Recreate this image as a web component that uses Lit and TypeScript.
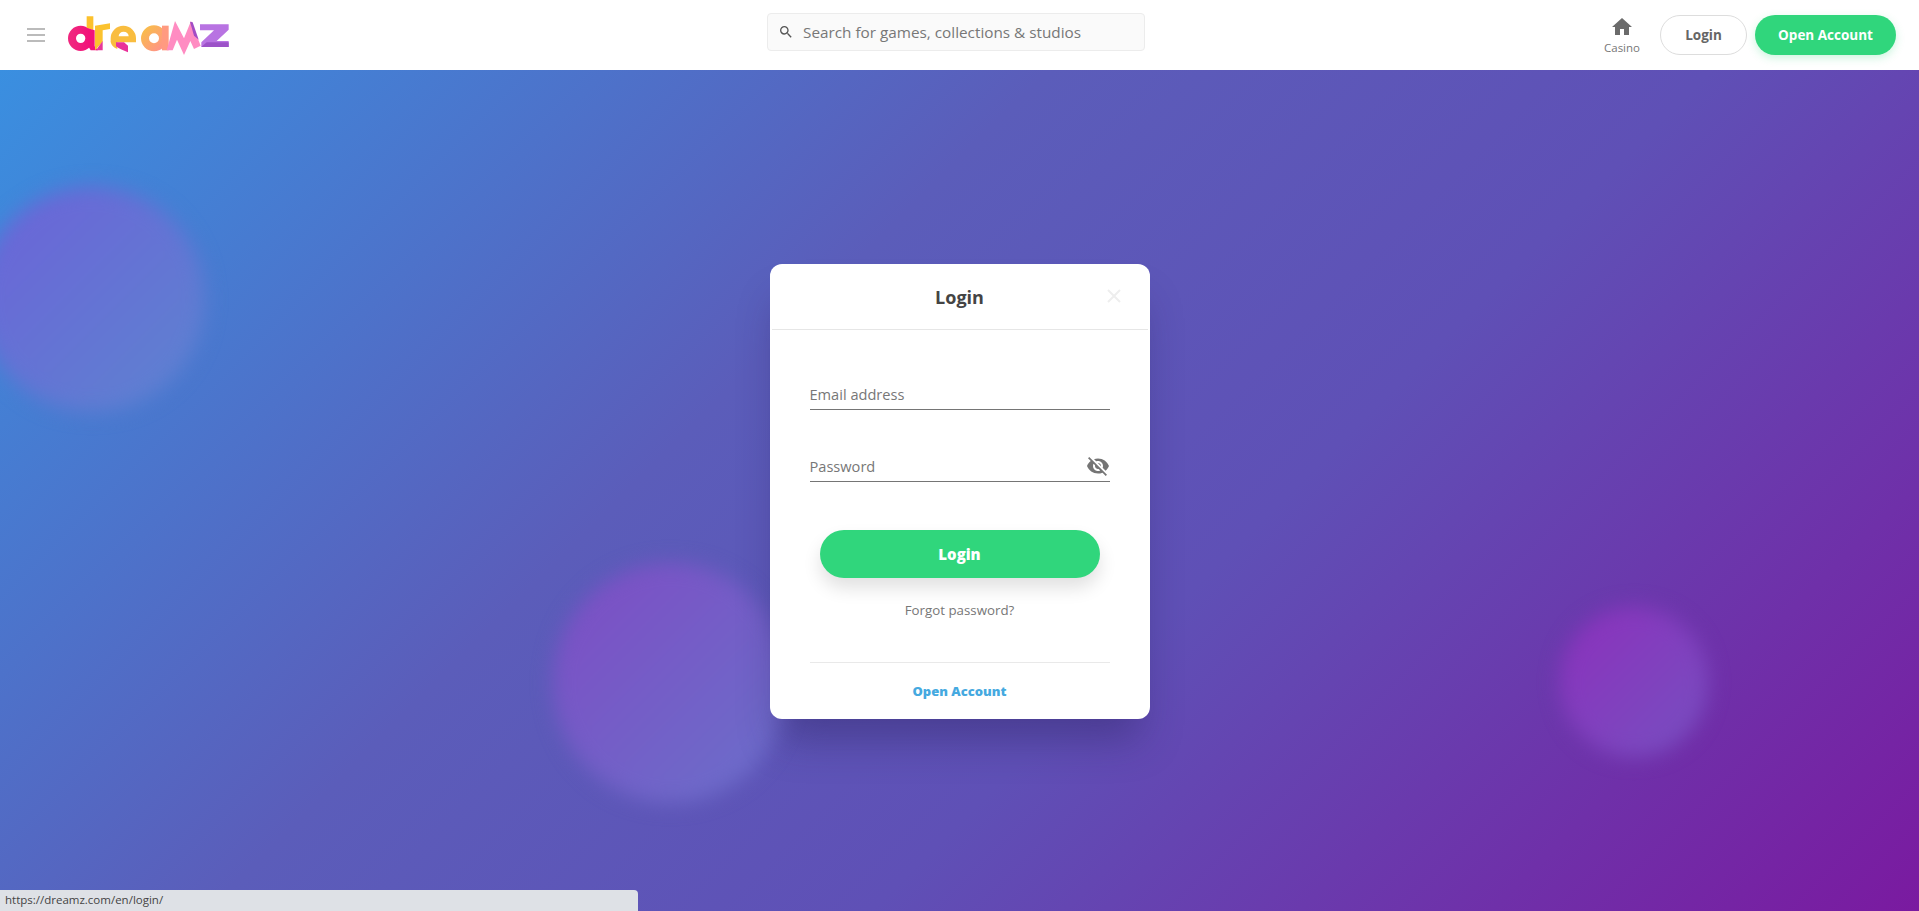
import { LitElement, html, css, svg } from "lit";
import { customElement } from "lit/decorators.js";

const logo = svg`<svg class="logo" viewBox="0 0 540 180" width="180" height="60" aria-label="dreamz">
  <defs>
    <linearGradient id="lg-a" x1="0" y1="0" x2="1" y2="1"><stop offset="0" stop-color="#f9bb4c"/><stop offset="1" stop-color="#ff9488"/></linearGradient>
    <linearGradient id="lg-d" x1="0" y1="0" x2="1" y2="0"><stop offset="0" stop-color="#f0267e"/><stop offset="1" stop-color="#f2127a"/></linearGradient>
  </defs>
  <circle cx="62" cy="100" r="26" fill="none" stroke="url(#lg-d)" stroke-width="24"/>
  <polygon points="80,34 100,34 100,76 80,68" fill="#fcc12c"/>
  <polygon points="84,70 104,76 104,124 114,136 92,136 84,122" fill="#f2127a"/>
  <polygon points="105,62 150,55 150,72 128,76 128,110 105,136" fill="#fbc22e"/>
  <polygon points="128,108 128,136 108,136" fill="#e7389a"/>
  <path d="M152 100 A38 38 0 0 1 228 100 L228 112 L152 112 Z M176 94 L206 94 A15 14 0 0 0 176 94 Z" fill="#f9bd3f" fill-rule="evenodd"/>
  <path d="M152 110 L172 110 L172 132 Q154 124 152 110 Z" fill="#f9bd3f"/>
  <path d="M168 112 L192 112 L204 122 L204 142 L186 134 Q174 130 168 124 Z" fill="#e9319a"/>
  <circle cx="282" cy="100" r="27" fill="none" stroke="url(#lg-a)" stroke-width="24"/>
  <rect x="306" y="62" width="20" height="74" fill="#ff9a80"/>
  <polygon points="320,136 345,48 372,100 393,48 422,122 402,132 391,108 372,150 351,104 338,136" fill="#ff8cc2"/>
  <polygon points="390,50 398,52 416,104 402,92" fill="#a24cc4"/>
  <polygon points="420,58 506,58 506,74 470,108 506,108 506,126 424,126 424,112 462,76 420,76" fill="#b873e2"/>
  <polygon points="440,112 506,112 506,126 424,126" fill="#9c52c8"/>
</svg>`;

@customElement("app-root")
export class AppRoot extends LitElement {
  static styles = css`
    :host {
      display: flex;
      flex-direction: column;
      height: 100vh;
      overflow: hidden;
      position: relative;
      font-family: "Open Sans", "Noto Sans", sans-serif;
      color: #666;
    }
    header {
      height: 70px;
      flex: none;
      background: #fff;
      display: grid;
      grid-template-columns: 740px 378px 1fr;
      align-items: center;
      position: relative;
      z-index: 2;
      padding: 0 23px 0 27px;
      box-sizing: border-box;
    }
    .brand { display: flex; align-items: center; gap: 15px; }
    .burger { width: 18px; display: flex; flex-direction: column; gap: 4px; }
    .burger i { display: block; height: 2px; background: #bbb; }
    .logo { display: block; }
    .search {
      align-self: start;
      margin-top: 13px;
      height: 38px;
      box-sizing: border-box;
      background: #fafafa;
      border: 1px solid #ececec;
      border-radius: 4px;
      display: flex;
      align-items: center;
      padding-left: 10px;
      gap: 9px;
      font-size: 15.3px;
      color: #777;
    }
    .nav { display: flex; align-items: center; justify-content: flex-end; gap: 8px; }
    .casino {
      display: flex; flex-direction: column; align-items: center;
      font-size: 11.5px; line-height: 14px; color: #777; margin-right: 12px;
    }
    .casino svg { display: block; margin-bottom: 2px; }
    .btn {
      height: 40px; border-radius: 20px; box-sizing: border-box;
      display: flex; align-items: center; justify-content: center;
      font-size: 13.5px; font-weight: 700;
    }
    .btn.ghost { width: 87px; border: 1px solid #ddd; color: #666; background: #fff; }
    .btn.green { width: 141px; background: #30d67c; color: #fff; box-shadow: 0 3px 8px rgba(48, 214, 124, 0.25); }
    main {
      flex: 1;
      position: relative;
      display: grid;
      place-items: center;
      padding-top: 2px;
      background: linear-gradient(135deg, #3a8fe0 0%, #5b5dba 38%, #5f50b6 62%, #7a1aa0 100%);
      overflow: hidden;
    }
    .bubble { position: absolute; border-radius: 50%; filter: blur(10px); }
    .b1 { left: -20px; top: 117px; width: 225px; height: 225px; background: linear-gradient(135deg, #6c62d8, #5d84d0); }
    .b2 { left: 553px; top: 493px; width: 235px; height: 240px; background: linear-gradient(135deg, #7e4cc4, #6a70ca); }
    .b3 { left: 1560px; top: 537px; width: 148px; height: 150px; background: linear-gradient(135deg, #8c30bc, #7650c0); }
    .modal {
      position: relative;
      width: 380px;
      background: #fff;
      border-radius: 12px;
      box-shadow: 0 30px 40px -10px rgba(40, 30, 90, 0.4);
      display: flex;
      flex-direction: column;
    }
    .head {
      height: 65px;
      margin: 0 2px;
      border-bottom: 1px solid #e6e6e6;
      display: grid;
      place-items: center;
      position: relative;
      font-size: 18px;
      font-weight: 700;
      color: #444;
    }
    .close { position: absolute; right: 26px; top: 24px; display: block; }
    .body { padding: 0 40px 18px; display: flex; flex-direction: column; }
    .field {
      height: 31px;
      box-sizing: border-box;
      border-bottom: 1px solid #757575;
      display: flex;
      align-items: center;
      justify-content: space-between;
      font-size: 14.6px;
      color: #777;
    }
    .field.first { margin-top: 49px; }
    .field.second { margin-top: 41px; }
    .submit {
      margin: 48px 10px 0;
      height: 48px;
      border-radius: 24px;
      background: #30d67c;
      color: #fff;
      font-size: 15px;
      font-weight: 800;
      display: grid;
      place-items: center;
      box-shadow: 0 10px 18px rgba(0, 0, 0, 0.12);
    }
    .forgot { margin-top: 23px; text-align: center; font-size: 13.3px; line-height: 18px; color: #777; }
    .rule { margin-top: 43px; border-top: 1px solid #e9e9e9; }
    .open { margin-top: 18px; text-align: center; font-size: 13px; line-height: 20px; font-weight: 800; color: #45a9e0; }
    .status {
      position: absolute;
      left: 0;
      bottom: 0;
      width: 638px;
      height: 21px;
      background: #dee1e6;
      border-top-right-radius: 4px;
      font-size: 11.5px;
      line-height: 20px;
      padding-left: 5px;
      box-sizing: border-box;
      color: #444;
      z-index: 3;
    }
  `;

  render() {
    return html`
      <header>
        <div class="brand">
          <div class="burger"><i></i><i></i><i></i></div>
          ${logo}
        </div>
        <div class="search">
          <svg width="16" height="16" viewBox="0 0 24 24" fill="#555"><path d="M15.5 14h-.79l-.28-.27A6.47 6.47 0 0 0 16 9.5 6.5 6.5 0 1 0 9.5 16c1.61 0 3.09-.59 4.23-1.57l.27.28v.79l5 4.99L20.49 19l-4.99-5zm-6 0C7.01 14 5 11.99 5 9.5S7.01 5 9.5 5 14 7.01 14 9.5 11.99 14 9.5 14z"/></svg>
          <span>Search for games, collections &amp; studios</span>
        </div>
        <nav class="nav">
          <div class="casino">
            <svg width="24" height="24" viewBox="0 0 24 24" fill="#6b6b6b"><path d="M10 20v-6h4v6h5v-8h3L12 3 2 12h3v8z"/></svg>
            <span>Casino</span>
          </div>
          <div class="btn ghost">Login</div>
          <div class="btn green">Open Account</div>
        </nav>
      </header>
      <main>
        <div class="bubble b1"></div>
        <div class="bubble b2"></div>
        <div class="bubble b3"></div>
        <section class="modal">
          <div class="head">
            <span>Login</span>
            <svg class="close" width="16" height="16" viewBox="0 0 16 16" stroke="#eeeeee" stroke-width="2" fill="none"><path d="M2 2l12 12M14 2L2 14"/></svg>
          </div>
          <div class="body">
            <div class="field first"><span>Email address</span></div>
            <div class="field second">
              <span>Password</span>
              <svg width="24" height="24" viewBox="0 0 24 24" fill="#757575"><path d="M12 7c2.76 0 5 2.24 5 5 0 .65-.13 1.26-.36 1.83l2.92 2.92c1.51-1.26 2.7-2.89 3.43-4.75-1.73-4.39-6-7.5-11-7.5-1.4 0-2.74.25-3.98.7l2.16 2.16C10.74 7.13 11.35 7 12 7zM2 4.27l2.28 2.28.46.46C3.08 8.3 1.78 10.02 1 12c1.73 4.39 6 7.5 11 7.5 1.55 0 3.03-.3 4.38-.84l.42.42L19.73 22 21 20.73 3.27 3 2 4.27zM7.53 9.8l1.55 1.55c-.05.21-.08.43-.08.65 0 1.66 1.34 3 3 3 .22 0 .44-.03.65-.08l1.55 1.55c-.67.33-1.41.53-2.2.53-2.76 0-5-2.24-5-5 0-.79.2-1.53.53-2.2zm4.31-.78l3.15 3.15.02-.16c0-1.66-1.34-3-3-3l-.17.01z"/></svg>
            </div>
            <div class="submit">Login</div>
            <div class="forgot">Forgot password?</div>
            <div class="rule"></div>
            <div class="open">Open Account</div>
          </div>
        </section>
      </main>
      <div class="status">https://dreamz.com/en/login/</div>
    `;
  }
}
